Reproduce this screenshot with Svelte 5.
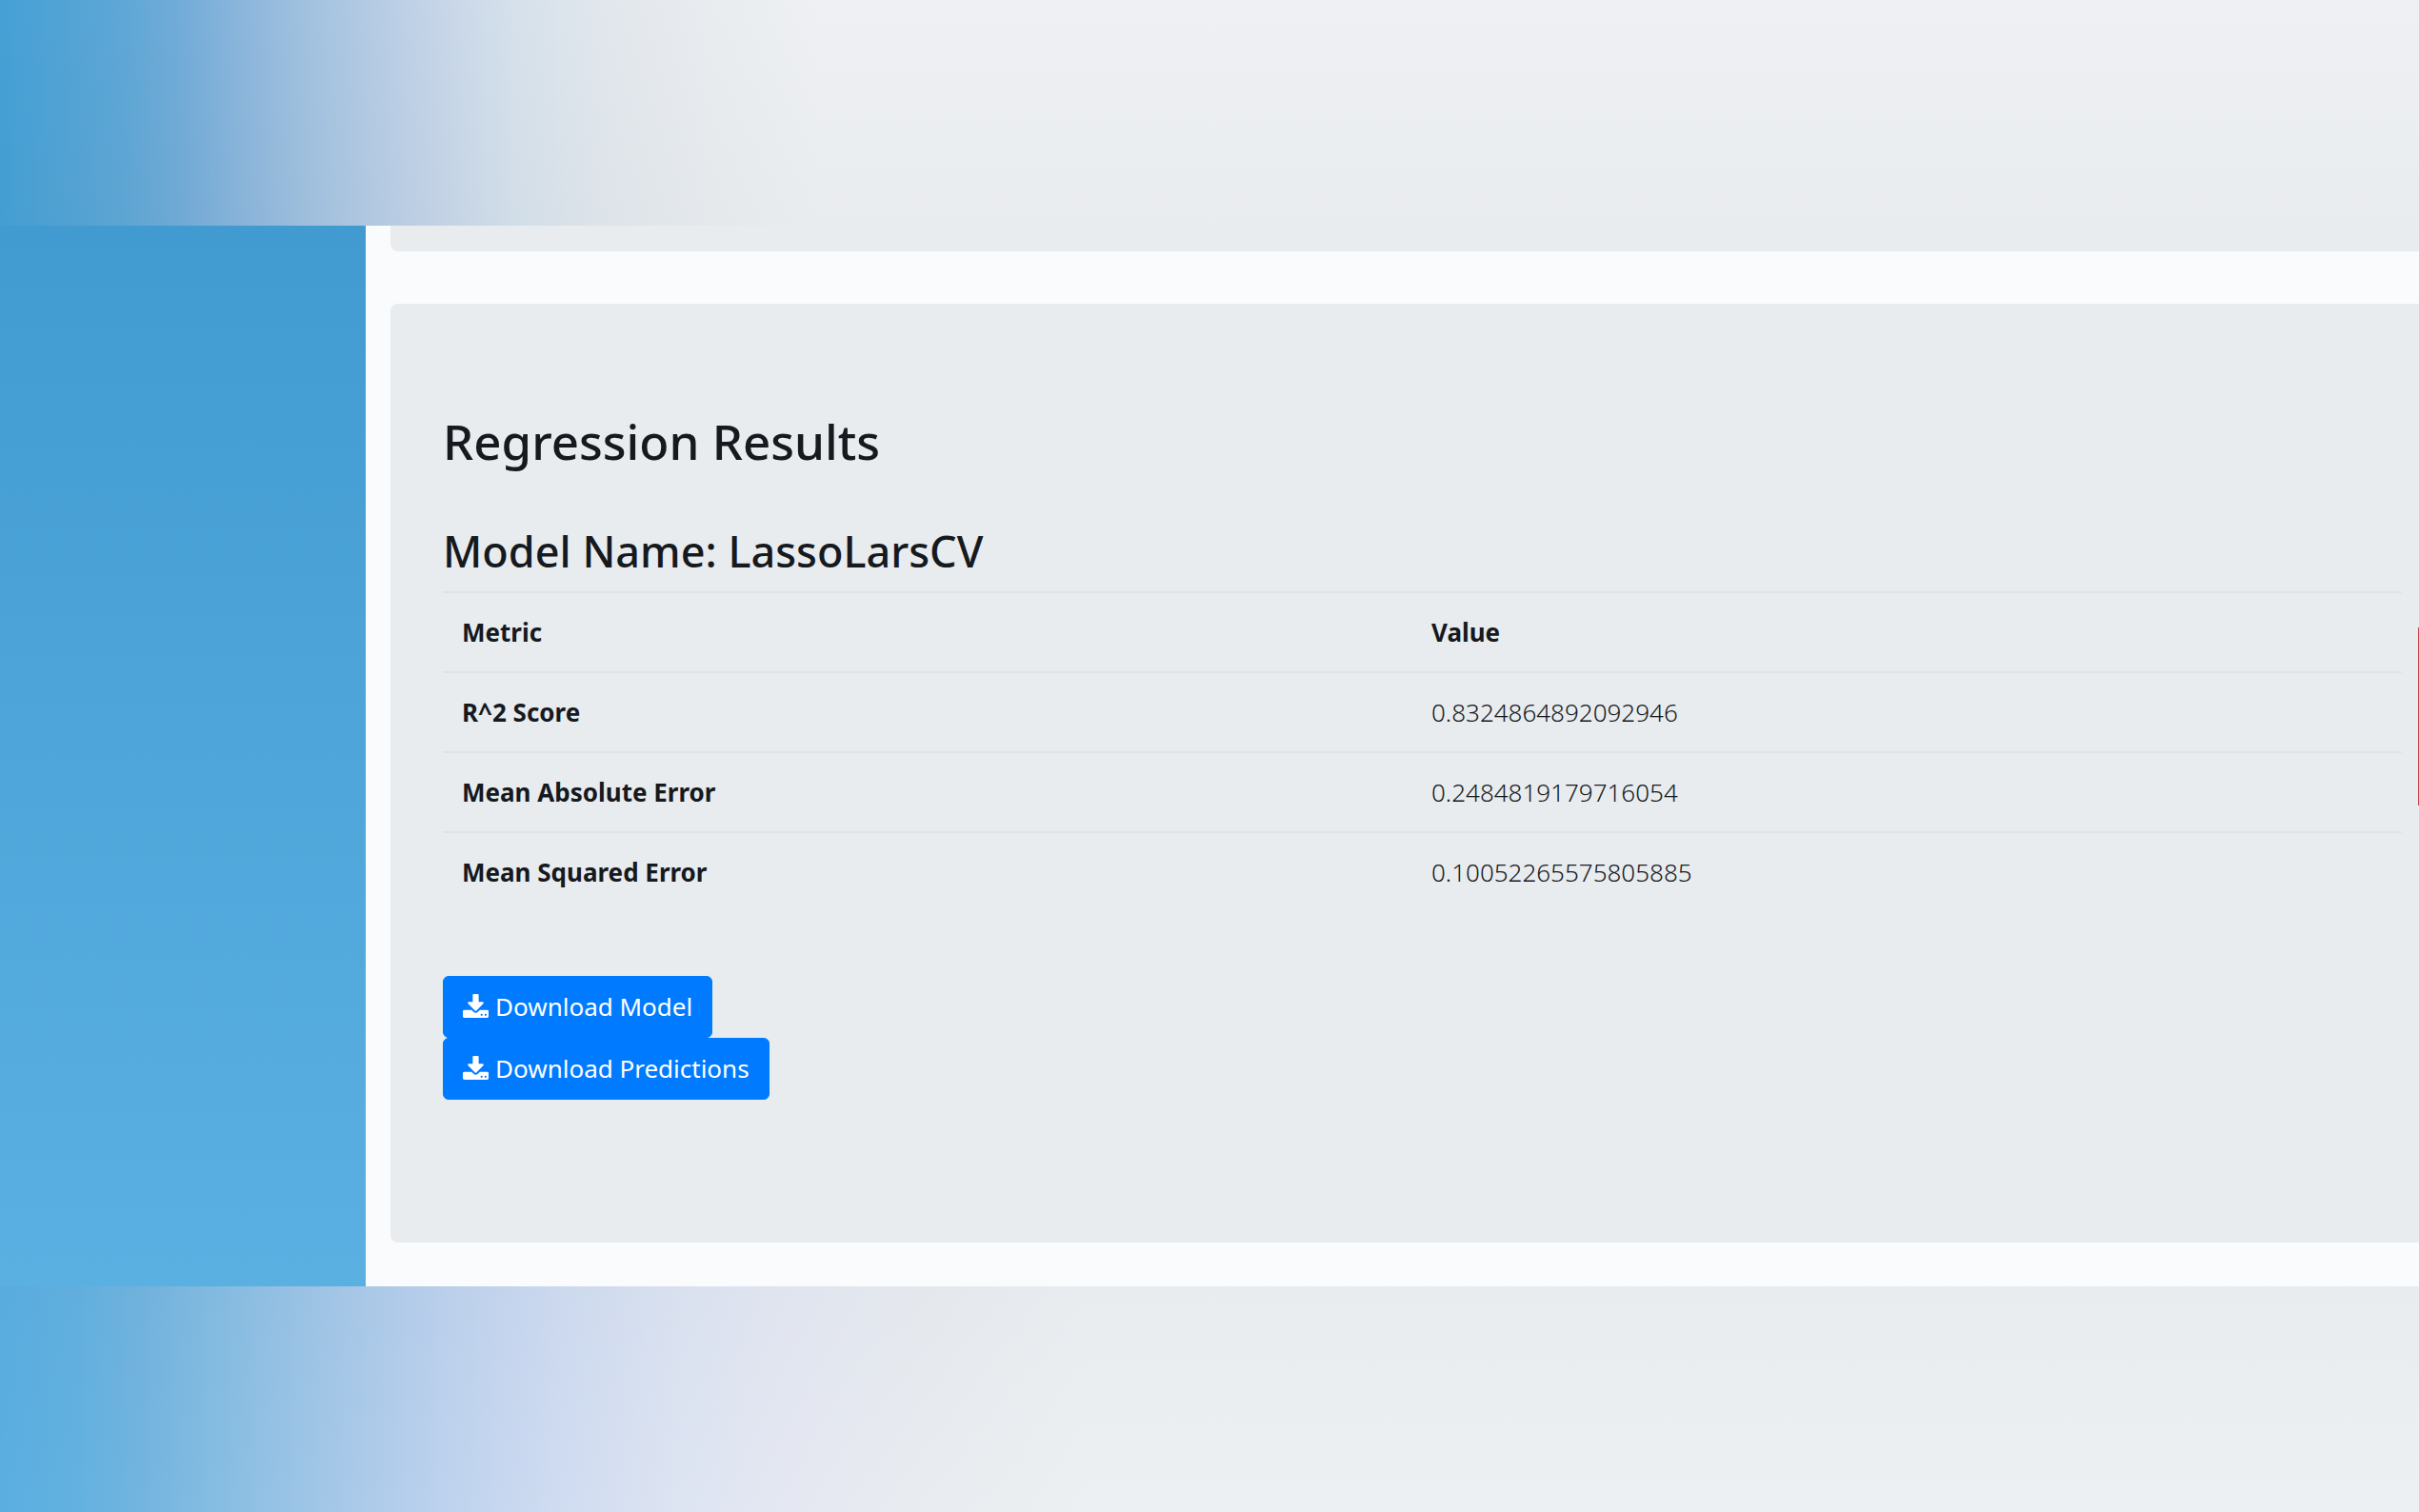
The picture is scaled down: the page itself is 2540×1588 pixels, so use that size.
<script>
  const modelName = 'LassoLarsCV';

  const metrics = [
    { name: 'R^2 Score', value: '0.8324864892092946' },
    { name: 'Mean Absolute Error', value: '0.2484819179716054' },
    { name: 'Mean Squared Error', value: '0.10052265575805885' }
  ];

  const downloads = ['Download Model', 'Download Predictions'];
</script>

<div class="page">
  <header class="band top"></header>

  <div class="body">
    <aside class="sidebar"></aside>

    <main class="content">
      <section class="previous"></section>

      <section class="results">
        <h2>Regression Results</h2>
        <h3>Model Name: {modelName}</h3>

        <table>
          <thead>
            <tr>
              <th scope="col">Metric</th>
              <th scope="col">Value</th>
            </tr>
          </thead>
          <tbody>
            {#each metrics as metric}
              <tr>
                <th scope="row">{metric.name}</th>
                <td>{metric.value}</td>
              </tr>
            {/each}
          </tbody>
        </table>

        <div class="actions">
          {#each downloads as label}
            <button type="button">
              <svg viewBox="0 0 1664 1536" aria-hidden="true">
                <path
                  d="M1280 1344q0-26-19-45t-45-19-45 19-19 45 19 45 45 19 45-19 19-45zm256 0q0-26-19-45t-45-19-45 19-19 45 19 45 45 19 45-19 19-45zm128-224v320q0 40-28 68t-68 28H96q-40 0-68-28t-28-68v-320q0-40 28-68t68-28h465l135 136q58 56 136 56t136-56l136-136h464q40 0 68 28t28 68zm-325-569q17 41-14 70l-448 448q-18 19-45 19t-45-19L339 621q-31-29-14-70 17-39 59-39h256V64q0-26 19-45t45-19h256q26 0 45 19t19 45v448h256q42 0 59 39z"
                />
              </svg>
              {label}
            </button>
          {/each}
        </div>
      </section>

      <div class="edge"></div>
    </main>
  </div>

  <footer class="band bottom"></footer>
</div>

<style>
  :global(body) {
    background: #eef0f3;
    font-family: 'Segoe UI', 'Noto Sans', 'Open Sans', sans-serif;
    font-size: 26px;
    color: #16191d;
  }

  .page {
    display: flex;
    flex-direction: column;
    min-height: 100vh;
    overflow: hidden;
  }

  .band {
    background-blend-mode: multiply;
  }

  .band.top {
    height: 237px;
    background-image:
      linear-gradient(to bottom, #ffffff, #fafbfb),
      linear-gradient(
        to right,
        #45a0d5 0,
        #5ea7d6 128px,
        #72acd8 190px,
        #8cb6dc 255px,
        #a0c1df 319px,
        #b3cae3 383px,
        #c3d3e7 446px,
        #d6e1eb 542px,
        #e2e7ed 638px,
        #eaedf0 765px,
        #eef0f3 861px
      );
  }

  .band.bottom {
    flex: 1;
    min-height: 237px;
    background-image:
      linear-gradient(to bottom, #fafbfc, #ffffff),
      linear-gradient(
        to right,
        #5aafe1 0,
        #62b1e0 77px,
        #74b5df 153px,
        #89bee3 240px,
        #a6c8e8 355px,
        #bfd3ee 475px,
        #d0dcf1 590px,
        #dde4f2 710px,
        #e5e8f2 830px,
        #e9ecf0 980px,
        #edf0f2 1140px
      );
  }

  .body {
    display: flex;
  }

  .sidebar {
    flex: 0 0 384px;
    background: linear-gradient(to bottom, #419bd1, #5bb0e2);
  }

  .content {
    position: relative;
    flex: 1;
    padding: 0 0 46px 26px;
    background: #f9fbfd;
  }

  .previous,
  .results {
    background: #e8ecef;
  }

  .previous {
    height: 27px;
    margin-bottom: 55px;
    border-radius: 0 0 0 8px;
  }

  .results {
    padding: 112px 18px 150px 55px;
    border-radius: 8px 0 0 8px;
  }

  h2,
  h3 {
    margin: 0;
    font-weight: 500;
  }

  h2 {
    margin-bottom: 52px;
    font-size: 51px;
    line-height: 64px;
  }

  h3 {
    margin-bottom: 10px;
    font-size: 45px;
    line-height: 64px;
  }

  table {
    width: 100%;
    border-collapse: collapse;
    table-layout: fixed;
  }

  th,
  td {
    padding: 22px 20px;
    border-top: 2px solid #dfe3e6;
    line-height: 38px;
    text-align: left;
  }

  th {
    font-weight: 700;
  }

  td {
    font-weight: 350;
  }

  th:first-child {
    width: 978px;
  }

  .actions {
    display: flex;
    flex-direction: column;
    align-items: flex-start;
    margin-top: 68px;
  }

  button {
    display: flex;
    align-items: center;
    gap: 7px;
    padding: 12px 20px;
    border: 1px solid #007bff;
    border-radius: 6px;
    background: #007bff;
    color: #fff;
    font: inherit;
    line-height: 39px;
    cursor: pointer;
  }

  button:hover {
    background: #0069d9;
  }

  button svg {
    width: 27px;
    height: 25px;
    margin-bottom: 3px;
    fill: currentColor;
  }

  .edge {
    position: absolute;
    top: 422px;
    right: 0;
    width: 1px;
    height: 187px;
    background: #c8414b;
  }
</style>
